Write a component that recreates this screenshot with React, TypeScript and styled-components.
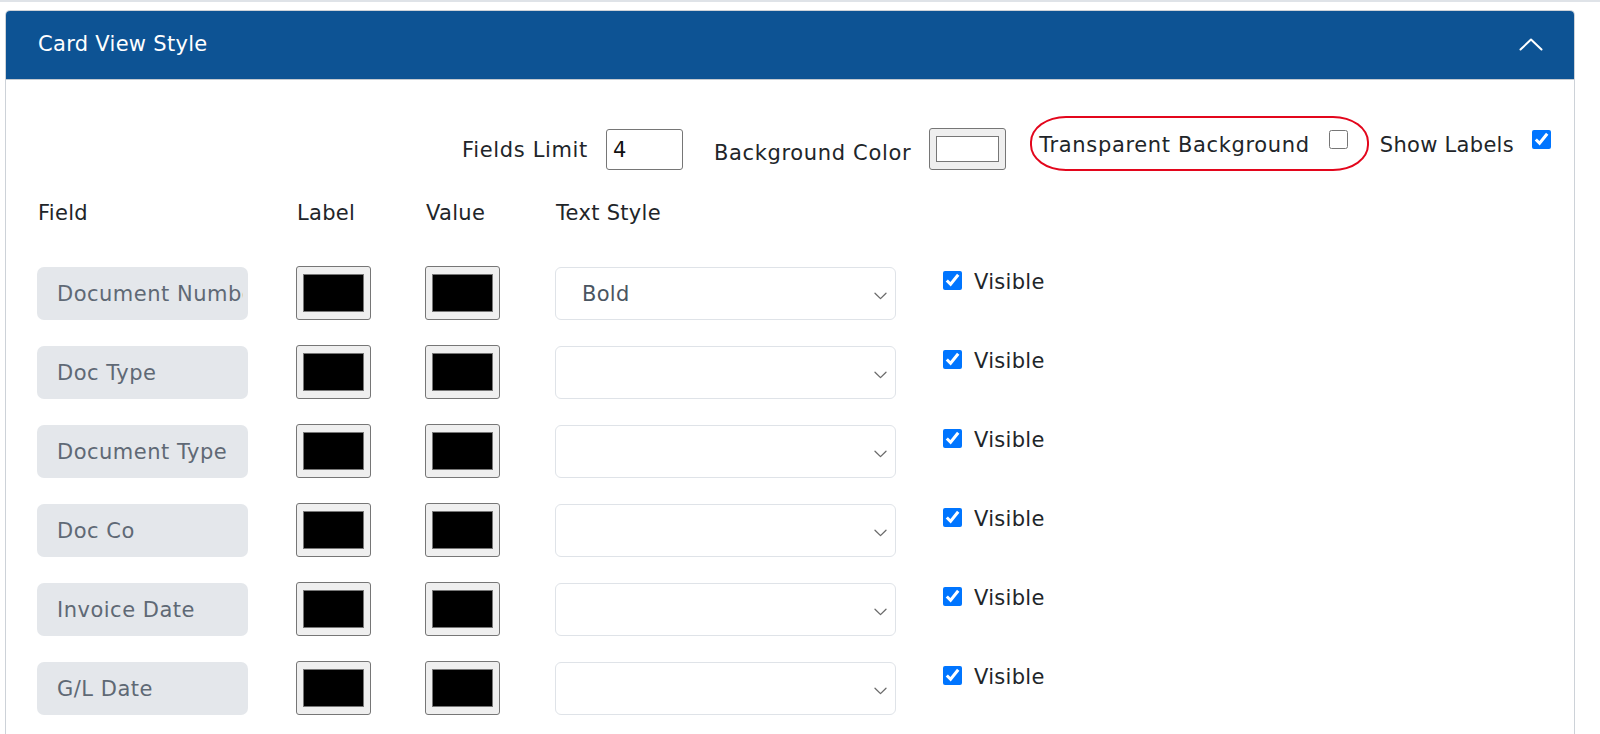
import styled, { createGlobalStyle } from 'styled-components'

type FieldRow = {
  name: string
  textStyle?: string
}

const fieldRows: FieldRow[] = [
  { name: 'Document Number', textStyle: 'Bold' },
  { name: 'Doc Type' },
  { name: 'Document Type' },
  { name: 'Doc Co' },
  { name: 'Invoice Date' },
  { name: 'G/L Date' },
]

const FONT = '"DejaVu Sans", "Liberation Sans", sans-serif'

const GlobalStyle = createGlobalStyle`
  html,
  body {
    margin: 0;
    background: #ffffff;
  }

  body {
    font-family: ${FONT};
    font-size: 21px;
    letter-spacing: 0.3px;
    color: #212529;
  }

  * {
    box-sizing: border-box;
  }
`

function ChevronUpIcon() {
  return (
    <svg width="24" height="13" viewBox="0 0 24 13" fill="none" aria-hidden="true">
      <path
        d="M1.5 11.5L12 1.5L22.5 11.5"
        stroke="currentColor"
        strokeWidth="2"
        strokeLinecap="round"
        strokeLinejoin="round"
      />
    </svg>
  )
}

function ChevronDownIcon() {
  return (
    <svg width="13" height="8" viewBox="0 0 13 8" fill="none" aria-hidden="true">
      <path
        d="M1 1.2L6.5 6.6L12 1.2"
        stroke="currentColor"
        strokeWidth="1.3"
        strokeLinecap="round"
        strokeLinejoin="round"
      />
    </svg>
  )
}

export default function App() {
  return (
    <Page>
      <GlobalStyle />
      <Card>
        <CardHeader>
          <CardTitle>Card View Style</CardTitle>
          <CollapseButton type="button" aria-label="Collapse">
            <ChevronUpIcon />
          </CollapseButton>
        </CardHeader>

        <CardBody>
          <OptionsBar>
            <OptionGroup $top={13}>
              <OptionLabel>Fields Limit</OptionLabel>
              <LimitInput type="text" defaultValue="4" />
            </OptionGroup>

            <OptionGroup $top={12}>
              <OptionLabel $drop={8}>Background Color</OptionLabel>
              <ColorInput type="color" defaultValue="#ffffff" />
            </OptionGroup>

            <Highlight>
              <OptionLabel $drop={3}>Transparent Background</OptionLabel>
              <Check type="checkbox" $raise={8} />
            </Highlight>

            <OptionGroup $top={14}>
              <OptionLabel $drop={3} $tight>
                Show Labels
              </OptionLabel>
              <Check type="checkbox" defaultChecked $raise={8} />
            </OptionGroup>
          </OptionsBar>

          <ColumnHeads>
            <ColumnHead>Field</ColumnHead>
            <ColumnHead>Label</ColumnHead>
            <ColumnHead>Value</ColumnHead>
            <ColumnHead>Text Style</ColumnHead>
          </ColumnHeads>

          <RowList>
            {fieldRows.map((row) => (
              <FieldLine key={row.name}>
                <FieldName type="text" readOnly value={row.name} />
                <SwatchInput type="color" defaultValue="#000000" />
                <SwatchInput type="color" defaultValue="#000000" />
                <StyleSelect type="button">
                  <span>{row.textStyle ?? ''}</span>
                  <SelectArrow>
                    <ChevronDownIcon />
                  </SelectArrow>
                </StyleSelect>
                <VisibleToggle>
                  <Check type="checkbox" defaultChecked />
                  <span>Visible</span>
                </VisibleToggle>
              </FieldLine>
            ))}
          </RowList>
        </CardBody>
      </Card>
    </Page>
  )
}

const Page = styled.div`
  min-height: 734px;
  border-top: 2px solid #dfe3e8;
  padding: 8px 25px 0 5px;
`

const Card = styled.section`
  border: 1px solid #cdd2d8;
  border-bottom: 0;
  border-radius: 5px 5px 0 0;
  overflow: hidden;
  min-height: 740px;
`

const CardHeader = styled.header`
  display: flex;
  height: 69px;
  align-items: center;
  justify-content: space-between;
  padding: 0 31px 1px 32px;
  background: #0d5394;
  border-bottom: 1px solid #c3c9d0;
  color: #ffffff;
`

const CardTitle = styled.h2`
  margin: 0;
  font-size: 21px;
  font-weight: 400;
  line-height: 1;
  letter-spacing: 0.3px;
`

const CollapseButton = styled.button`
  display: inline-flex;
  border: 0;
  padding: 0;
  background: transparent;
  color: #ffffff;
  cursor: pointer;
`

const CardBody = styled.div`
  padding: 0 23px 0 31px;
`

const OptionsBar = styled.div`
  display: flex;
  justify-content: flex-end;
  align-items: flex-start;
  padding-top: 36px;
  height: 91px;
`

const OptionGroup = styled.div<{ $top: number }>`
  display: flex;
  align-items: center;
  gap: 18px;
  margin-top: ${({ $top }) => $top}px;
  margin-left: 31px;

  &:first-child {
    margin-left: 0;
  }

  &:last-child {
    margin-left: 11px;
  }
`

const OptionLabel = styled.span<{ $drop?: number; $tight?: boolean }>`
  padding-top: ${({ $drop = 0 }) => $drop}px;
  line-height: 24px;
  letter-spacing: ${({ $tight }) => ($tight ? '0.3px' : '0.65px')};
  white-space: nowrap;
`

const Highlight = styled.div`
  display: flex;
  height: 55px;
  align-items: center;
  gap: 19px;
  margin-left: 24px;
  padding: 0 19px 0 7px;
  border: 2px solid #e3061c;
  border-radius: 36px / 26px;
`

const LimitInput = styled.input`
  width: 77px;
  height: 41px;
  padding: 0 6px;
  border: 1px solid #767676;
  border-radius: 3px;
  font: inherit;
  letter-spacing: inherit;
  color: #111111;
`

const ColorInput = styled.input`
  width: 77px;
  height: 42px;
  padding: 2px 3px;
  border: 1px solid #767676;
  border-radius: 3px;
  background: #efefef;
  cursor: pointer;

  &::-webkit-color-swatch-wrapper {
    padding: 5px 3px;
  }

  &::-webkit-color-swatch {
    border: 1px solid #777777;
    border-radius: 0;
  }
`

const Check = styled.input<{ $raise?: number }>`
  width: 19px;
  height: 19px;
  margin: 0 0 ${({ $raise = 0 }) => $raise}px;
  flex: 0 0 auto;
`

const columns = '259px 129px 130px 388px auto'

const ColumnHeads = styled.div`
  display: grid;
  grid-template-columns: ${columns};
  height: 30px;
  align-items: center;
  margin-top: 27px;
  padding-left: 1px;
`

const ColumnHead = styled.span`
  line-height: 30px;
`

const RowList = styled.div`
  display: flex;
  flex-direction: column;
  gap: 26px;
  margin-top: 39px;
`

const FieldLine = styled.div`
  display: grid;
  grid-template-columns: ${columns};
  height: 53px;
  align-items: stretch;
`

const FieldName = styled.input`
  width: 211px;
  height: 53px;
  padding: 0 5px 0 20px;
  border: 0;
  border-radius: 7px;
  background: #e4e7eb;
  color: #5f6975;
  font: inherit;
  letter-spacing: 0.5px;
  outline: none;
`

const SwatchInput = styled.input`
  width: 75px;
  height: 54px;
  margin-top: -1px;
  padding: 2px 3px;
  border: 1px solid #767676;
  border-radius: 3px;
  background: #efefef;
  cursor: pointer;

  &::-webkit-color-swatch-wrapper {
    padding: 5px 3px;
  }

  &::-webkit-color-swatch {
    border: 1px solid #777777;
    border-radius: 0;
  }
`

const StyleSelect = styled.button`
  display: flex;
  width: 341px;
  height: 53px;
  align-items: center;
  justify-content: space-between;
  padding: 0 8px 0 26px;
  border: 1px solid #dfe3e8;
  border-radius: 6px;
  background: #ffffff;
  color: #4a5561;
  font: inherit;
  letter-spacing: inherit;
  text-align: left;
  cursor: pointer;
`

const SelectArrow = styled.span`
  display: inline-flex;
  color: #6b6b6b;
  margin-top: 4px;
`

const VisibleToggle = styled.label`
  display: flex;
  align-self: start;
  align-items: flex-start;
  gap: 12px;
  padding-top: 3px;
  line-height: 24px;
  cursor: pointer;

  input {
    margin-top: 1px;
  }
`
